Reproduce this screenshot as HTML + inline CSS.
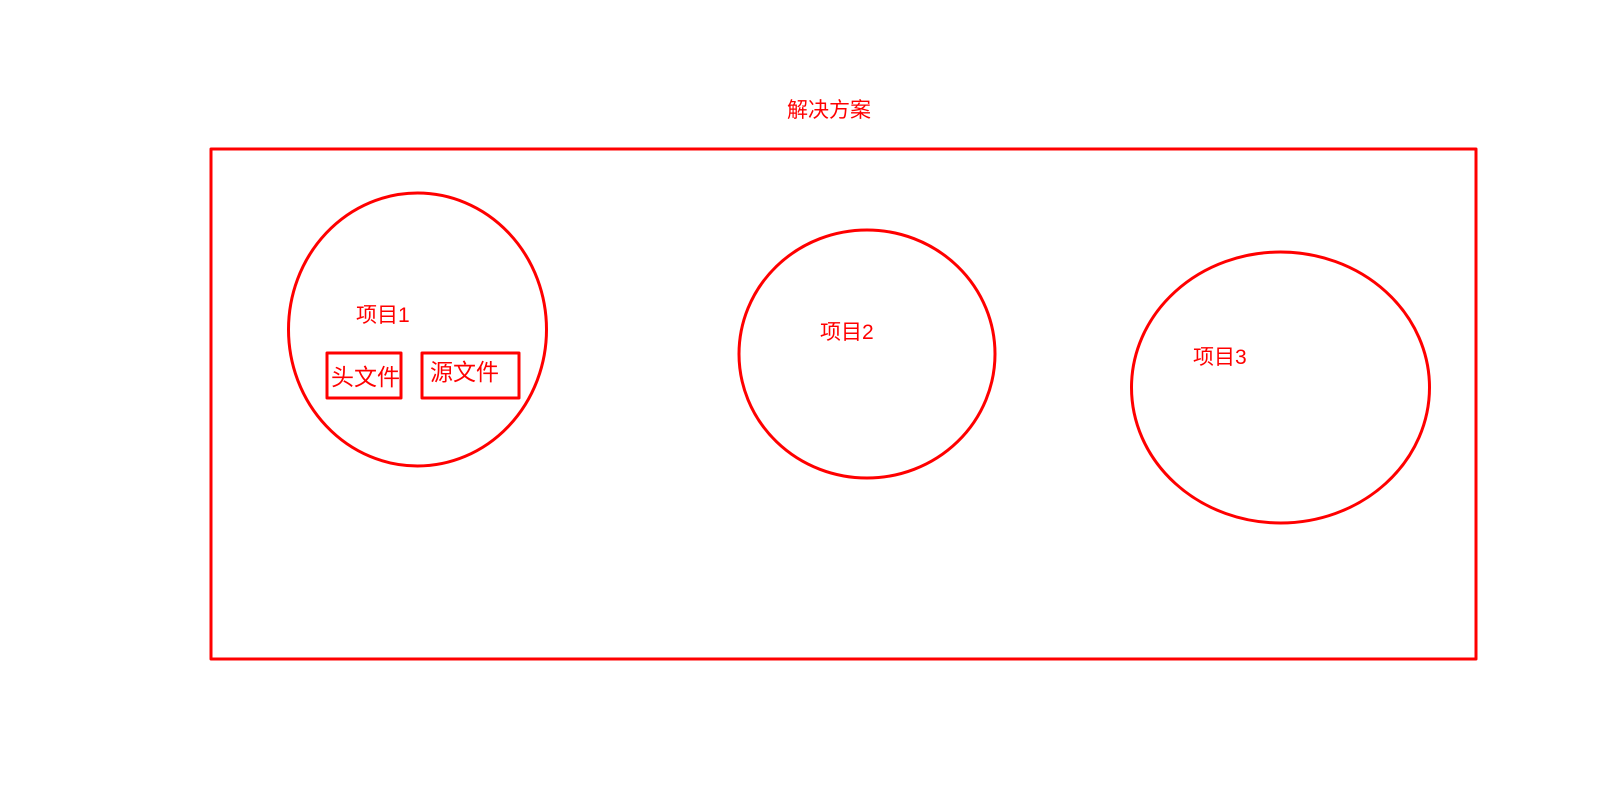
<!DOCTYPE html>
<html><head><meta charset="utf-8"><style>
html,body{margin:0;padding:0;background:#fff;}
svg{display:block;}
text{font-family:"Liberation Sans","Noto Sans CJK SC",sans-serif;fill:#ff0000;}
</style></head><body>
<svg width="1624" height="798" viewBox="0 0 1624 798" xmlns="http://www.w3.org/2000/svg">
<g fill="none" stroke="#ff0000" stroke-width="3" stroke-linejoin="round">
<rect x="211" y="149" width="1265" height="510"/>
<ellipse cx="417.5" cy="329.5" rx="129" ry="136.5"/>
<ellipse cx="867" cy="354" rx="128" ry="124"/>
<ellipse cx="1280.5" cy="387.5" rx="149" ry="135.5"/>
<rect x="327" y="353" width="74" height="45"/>
<rect x="422" y="353" width="97" height="45"/>
</g>
<text x="787" y="117" font-size="21">解决方案</text>
<text x="356" y="322" font-size="21">项目1</text>
<text x="331" y="385" font-size="23">头文件</text>
<text x="430" y="380" font-size="23">源文件</text>
<text x="820" y="339" font-size="21">项目2</text>
<text x="1193" y="364" font-size="21">项目3</text>
</svg>
</body></html>
